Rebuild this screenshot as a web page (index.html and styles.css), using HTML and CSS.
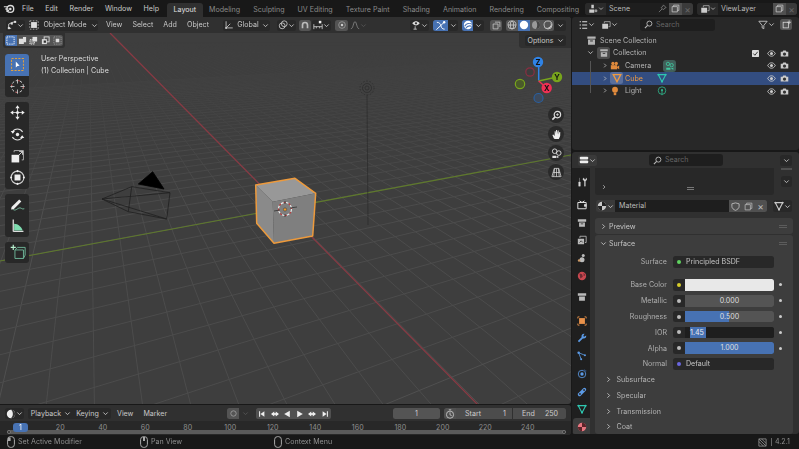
FILE: index.html
```html
<!DOCTYPE html>
<html lang="en">
<head>
<meta charset="utf-8">
<title>Blender 4.2.1</title>
<link rel="stylesheet" href="styles.css">
</head>
<body>
<svg class="defs" width="0" height="0" aria-hidden="true">
  <symbol id="down" viewBox="0 0 8 8"><path d="M1.5 2.8 4 5.3 6.5 2.8" fill="none" stroke="currentColor" stroke-width="1"/></symbol>
  <symbol id="right" viewBox="0 0 8 8"><path d="M2.8 1.5 5.3 4 2.8 6.5" fill="none" stroke="currentColor" stroke-width="1"/></symbol>
  <symbol id="eye" viewBox="0 0 10 10"><path d="M.8 5C2 2.8 3.4 2 5 2s3 .8 4.2 3C8 7.2 6.6 8 5 8S2 7.2.8 5Z" fill="none" stroke="currentColor"/><circle cx="5" cy="5" r="1.7" fill="currentColor"/></symbol>
  <symbol id="cam" viewBox="0 0 10 10"><path d="M.8 3h2l.8-1.2h2.8L7.2 3h2v5.4H.8Z" fill="currentColor"/><circle cx="5" cy="5.6" r="1.8" fill="#333"/></symbol>
  <symbol id="mouse" viewBox="0 0 8 12"><rect x=".6" y=".6" width="6.8" height="10.8" rx="3" fill="none" stroke="currentColor"/></symbol>
  <symbol id="mouse-l" viewBox="0 0 8 12"><rect x=".6" y=".6" width="6.8" height="10.8" rx="3" fill="none" stroke="currentColor"/><path d="M1 1.5h2.6V5H1Z" fill="currentColor"/></symbol>
  <symbol id="mouse-m" viewBox="0 0 8 12"><rect x=".6" y=".6" width="6.8" height="10.8" rx="3" fill="none" stroke="currentColor"/><path d="M3 1h2v4H3Z" fill="currentColor"/></symbol>
  <symbol id="box" viewBox="0 0 12 12"><path d="M1.5 1.5h9v2.5h-9ZM2.2 5h7.6v5.5H2.2Z" fill="currentColor"/><path d="M4.5 6.5h3" stroke="#282828"/></symbol>
  <symbol id="copy" viewBox="0 0 12 12"><path d="M3.5 3.5V1.5h7v7H8.5M1.5 3.5h7v7h-7Z" fill="none" stroke="currentColor"/></symbol>
  <symbol id="mesh" viewBox="0 0 12 12"><path d="M1.5 2h9L6 10.5Z" fill="none" stroke="currentColor" stroke-width="1.4"/><g fill="currentColor"><circle cx="1.8" cy="2" r="1.2"/><circle cx="10.2" cy="2" r="1.2"/><circle cx="6" cy="10.3" r="1.2"/></g></symbol>
  <symbol id="mat" viewBox="0 0 12 12"><circle cx="6" cy="6" r="5" fill="currentColor"/><path d="M6 6V1A5 5 0 0 1 11 6ZM6 6H1A5 5 0 0 0 6 11Z" fill="#222"/></symbol>
</svg>

<div class="app">
  <header class="topbar">
    <svg class="logo" viewBox="0 0 14 12"><circle cx="8.5" cy="6.5" r="4" fill="none" stroke="#ddd" stroke-width="1.6"/><circle cx="8.5" cy="6.5" r="1.5" fill="#ddd"/><path d="M1 4h5M2.5 6.5h4M4 9.5l3-1.5" stroke="#ddd" stroke-width="1.2"/></svg>
    <nav class="menu">
      <span>File</span><span>Edit</span><span>Render</span><span>Window</span><span>Help</span>
    </nav>
    <nav class="tabs">
      <span class="tab active">Layout</span><span class="tab">Modeling</span><span class="tab">Sculpting</span><span class="tab">UV Editing</span><span class="tab">Texture Paint</span><span class="tab">Shading</span><span class="tab">Animation</span><span class="tab">Rendering</span><span class="tab">Compositing</span>
    </nav>
    <div class="datablock scene">
      <span class="db-icon"><svg viewBox="0 0 12 12" class="ic10"><path d="M4 1h3v4H4ZM1.5 6.5h6v4h-6Z" fill="#ccc"/><circle cx="9.5" cy="8" r="1.8" fill="#999"/></svg><svg class="chev"><use href="#down"/></svg></span>
      <span class="db-name">Scene</span>
      <svg viewBox="0 0 10 10" class="ic9 pin"><path d="M6 1 9 4 7.5 4.5 6 6.5 3.5 4 5.5 2.5ZM4.5 5.5 1 9" fill="none" stroke="#777"/></svg>
      <span class="db-btn"><svg class="ic9"><use href="#copy"/></svg></span>
      <span class="db-x">×</span>
    </div>
    <div class="datablock layer">
      <span class="db-icon"><svg viewBox="0 0 12 12" class="ic10"><path d="M1.5 4.5h7v6h-7Z" fill="#ccc"/><path d="M4 4V2h7v6H9" fill="none" stroke="#aaa"/></svg><svg class="chev"><use href="#down"/></svg></span>
      <span class="db-name">ViewLayer</span>
      <span class="db-btn"><svg class="ic9"><use href="#copy"/></svg></span>
      <span class="db-x">×</span>
    </div>
  </header>

  <main class="workspace">
    <section class="left">
      <div class="viewport">
        <svg class="grid" id="grid" width="571" height="388" viewBox="0 17 571 388"></svg>
        <svg class="scene3d" width="571" height="388" viewBox="0 17 571 388">
          <path class="axis-x" d="M110 33 478 405"/>
          <path class="axis-y" d="M0 261 571 155"/>
          <g class="cam-obj">
            <path d="M102 199 131.700 186.700 170 192.700 166.700 219 128.300 211.700ZM102 199 170 192.700M102 199 166.700 219M131.700 186.700 128.300 211.700"/>
            <path class="cam-tri" d="M152.700 171.700 138.300 184 164 189Z"/>
          </g>
          <g class="light-obj">
            <circle cx="367" cy="88" r="7" stroke-dasharray="1.6 1.6"/>
            <circle cx="367" cy="88" r="4.500"/>
            <circle cx="367" cy="88" r="2"/>
            <path d="M367 95 368 225"/>
          </g>
          <path class="c-top" d="M255.700 185 295 178.300 315.700 193.300 272.700 201.700Z"/>
          <path class="c-left" d="M255.700 185 272.700 201.700 274 243.300 256.700 223.300Z"/>
          <path class="c-right" d="M272.700 201.700 315.700 193.300 312.700 236 274 243.300Z"/>
          <path class="c-edge" d="M255.700 185 295 178.300 315.700 193.300 312.700 236 274 243.300 256.700 223.300Z"/>
          <g class="cursor3d">
            <circle class="c1" cx="285" cy="209" r="6.500"/>
            <circle class="c2" cx="285" cy="209" r="6.500"/>
            <path d="M274 211 280 210M290 208 297 207M285 201V204M285 214V217"/>
            <circle class="c3" cx="285" cy="209.500" r="1.600"/>
          </g>
        </svg>

        <div class="vp-header">
          <span class="btn et"><svg viewBox="0 0 12 12" class="ic10"><path d="M2 10V5l4-2 4-1M2 10h3" fill="none" stroke="#ddd"/><g fill="#ddd"><rect x="1" y="8.500" width="2.500" height="2.500"/><rect x="4.500" y="3" width="2.500" height="2.500"/><rect x="8.500" y="1" width="2.500" height="2.500"/></g></svg><svg class="chev"><use href="#down"/></svg></span>
          <span class="btn mode"><svg viewBox="0 0 12 12" class="ic10"><rect x="2.500" y="2.500" width="7" height="7" fill="#ddd"/><rect x="1" y="1" width="10" height="10" fill="none" stroke="#bbb" stroke-dasharray="2 1.500"/></svg><span>Object Mode</span><svg class="chev"><use href="#down"/></svg></span>
          <nav class="vp-menu"><span>View</span><span>Select</span><span>Add</span><span>Object</span></nav>
          <span class="btn global"><svg viewBox="0 0 12 12" class="ic10"><path d="M2.500 1.500v8h8M2.500 9.500l5-5" fill="none" stroke="#ccc"/><circle cx="2.500" cy="9.500" r="1.200" fill="#ccc"/></svg><span>Global</span><svg class="chev"><use href="#down"/></svg></span>
          <span class="btn w19"><svg viewBox="0 0 12 12" class="ic10"><circle cx="5" cy="7" r="3.500" fill="none" stroke="#ccc"/><circle cx="7.500" cy="4.500" r="3.500" fill="none" stroke="#ccc"/></svg><svg class="chev"><use href="#down"/></svg></span>
          <span class="btn on-gray w12"><svg viewBox="0 0 12 12" class="ic10"><path d="M2 10V6a4 4 0 0 1 8 0v4H8V6a2 2 0 0 0-4 0v4Z" fill="#bbb"/></svg></span>
          <span class="btn w19"><svg viewBox="0 0 12 12" class="ic10"><path d="M1 5v6M11 5v6M1 8h10M4 8v2M8 8v2" stroke="#ccc" fill="none"/><rect x="7" y="1" width="3" height="3" fill="#eee"/></svg><svg class="chev"><use href="#down"/></svg></span>
          <span class="btn on-gray w13 prop"><svg viewBox="0 0 12 12" class="ic10"><circle cx="6" cy="6" r="4" fill="none" stroke="#999"/><circle cx="6" cy="6" r="1.500" fill="#ccc"/></svg></span>
          <span class="btn flat w18"><svg viewBox="0 0 12 12" class="ic10"><path d="M1 10.500C4 10.500 4 2 6 2s2 8.500 5 8.500" fill="none" stroke="#888"/></svg><svg class="chev dim"><use href="#down"/></svg></span>
          <span class="spacer"></span>
          <span class="btn w19"><svg viewBox="0 0 12 12" class="ic10"><path d="M1.500 4C3 2 5 1.500 6 1.500S9 2 10.500 4C9 6 7 6.500 6 6.500S3 6 1.500 4Z" fill="#ddd"/><circle cx="6" cy="4" r="1.400" fill="#333"/><path d="M5 7.500V11M3 11h4" stroke="#ccc"/></svg><svg class="chev"><use href="#down"/></svg></span>
          <span class="btn-pair"><span class="btn blue w15"><svg viewBox="0 0 12 12" class="ic11"><path d="M1.500 10.500 10.500 2M2 2.500c3 0 4 2 4.500 4s1.500 3.500 4 3.500" fill="none" stroke="#fff"/><circle cx="10" cy="2.500" r="1.300" fill="#fff"/></svg></span><span class="btn w10"><svg class="chev"><use href="#down"/></svg></span></span>
          <span class="btn-pair"><span class="btn blue w11"><svg viewBox="0 0 12 12" class="ic10"><circle cx="6" cy="6" r="5" fill="#fff"/><path d="M2 7.500C4 4 8 3.500 11 5M3.500 10c1.500-3 4-3.500 7-2.500" fill="none" stroke="#4772b3" stroke-width="1.300"/></svg></span><span class="btn w11"><svg class="chev"><use href="#down"/></svg></span></span>
          <span class="btn on-gray w12 xray"><svg viewBox="0 0 12 12" class="ic9"><path d="M4 1.500h6.500V8M1.500 4h6.500v6.500H1.500Z" fill="none" stroke="#ccc"/></svg></span>
          <span class="shading">
            <span class="sh"><svg viewBox="0 0 12 12" class="ic10"><circle cx="6" cy="6" r="4.800" fill="none" stroke="#ccc"/><ellipse cx="6" cy="6" rx="2" ry="4.800" fill="none" stroke="#ccc"/><path d="M1.200 6h9.600" stroke="#ccc"/></svg></span>
            <span class="sh active"><svg viewBox="0 0 12 12" class="ic10"><circle cx="6" cy="6" r="5" fill="#fff"/></svg></span>
            <span class="sh"><svg viewBox="0 0 12 12" class="ic10"><circle cx="6" cy="6" r="4.800" fill="#999"/><path d="M6 1.200a4.800 4.800 0 0 1 0 9.600C8 8 8 4 6 1.200Z" fill="#444"/></svg></span>
            <span class="sh"><svg viewBox="0 0 12 12" class="ic10"><circle cx="6" cy="6" r="4.800" fill="none" stroke="#ccc"/><path d="M9 3a4.500 4.500 0 0 1-6 6A4 4 0 0 0 9 3Z" fill="#ccc"/></svg></span>
          </span>
          <span class="btn w12"><svg class="chev"><use href="#down"/></svg></span>
        </div>

        <div class="select-modes">
          <span class="sm blue"><svg viewBox="0 0 10 10" class="ic9"><rect x="1" y="1" width="8" height="8" fill="none" stroke="#fff" stroke-dasharray="1.500 1"/></svg></span>
          <span class="sm"><svg viewBox="0 0 10 10" class="ic9"><path d="M1 3h4.500v-2h3.500v6h-2.500v2h-5.500Z" fill="#ddd"/></svg></span>
          <span class="sm"><svg viewBox="0 0 10 10" class="ic9"><path d="M4 1h5v5H6v3H1V4h3Z" fill="#888"/><rect x="1" y="4" width="5" height="5" fill="none" stroke="#ddd" stroke-dasharray="1.500 1"/><rect x="4" y="1" width="5" height="5" fill="#ddd"/></svg></span>
          <span class="sm"><svg viewBox="0 0 10 10" class="ic9"><rect x="3.500" y="1" width="5.500" height="5.500" fill="none" stroke="#ddd"/><rect x="1" y="3.500" width="5.500" height="5.500" fill="#ddd"/><rect x="3" y="5" width="2.500" height="2.500" fill="#333"/></svg></span>
          <span class="sm"><svg viewBox="0 0 10 10" class="ic9"><rect x="1" y="1" width="8" height="8" fill="none" stroke="#999" stroke-dasharray="1.500 1"/><rect x="3" y="3" width="4" height="4" fill="#ddd"/></svg></span>
        </div>

        <div class="options-tab"><span class="btn options"><span>Options</span><svg class="chev"><use href="#down"/></svg></span></div>

        <div class="vp-text"><div>User Perspective</div><div>(1) Collection | Cube</div></div>

        <aside class="toolbar">
          <div class="tool-group">
            <span class="tool active"><svg viewBox="0 0 20 20" class="tool-ic"><rect x="3" y="3" width="14" height="14" fill="none" stroke="#e0a040" stroke-width="1.200" stroke-dasharray="2.500 1.500"/><path d="M8 6.500v7l2-1.800 2.500-.2Z" fill="#fff"/></svg></span>
            <span class="tool"><svg viewBox="0 0 20 20" class="tool-ic"><circle cx="10" cy="10" r="7" fill="none" stroke="#ddd" stroke-width="1.100" stroke-dasharray="3 2"/><circle cx="10" cy="10" r="7" fill="none" stroke="#c44" stroke-width="1.100" stroke-dasharray="2 9"/><path d="M10 1.500v5M10 13.500v5M1.500 10h5M13.500 10h5" stroke="#ccc"/></svg></span>
          </div>
          <div class="tool-group">
            <span class="tool"><svg viewBox="0 0 20 20" class="tool-ic"><path d="M10 3v14M3 10h14" stroke="#ddd"/><path d="M10 1.500 12.500 5h-5ZM10 18.500 12.500 15h-5ZM1.500 10 5 12.500v-5ZM18.500 10 15 12.500v-5Z" fill="#eee"/><circle cx="10" cy="10" r="1.800" fill="#eee"/></svg></span>
            <span class="tool"><svg viewBox="0 0 20 20" class="tool-ic"><path d="M4 7a7 7 0 0 1 12 0M16 13a7 7 0 0 1-12 0" fill="none" stroke="#ddd" stroke-width="1.300"/><path d="M2 6h5l-2.500 3ZM18 14h-5l2.500-3Z" fill="#eee"/><circle cx="10" cy="10" r="2" fill="#eee"/></svg></span>
            <span class="tool"><svg viewBox="0 0 20 20" class="tool-ic"><rect x="3" y="8" width="9" height="9" fill="#eee"/><path d="M6 5V3h11v11h-2" fill="none" stroke="#bbb"/><path d="M9 11 16 4M12 4h4v4" fill="none" stroke="#eee"/></svg></span>
            <span class="tool"><svg viewBox="0 0 20 20" class="tool-ic"><circle cx="10" cy="10" r="7.500" fill="none" stroke="#ccc" stroke-width="1.300"/><rect x="6.500" y="6.500" width="7" height="7" fill="#eee"/><g fill="#eee"><circle cx="10" cy="2.500" r="1.200"/><circle cx="10" cy="17.500" r="1.200"/><circle cx="2.500" cy="10" r="1.200"/><circle cx="17.500" cy="10" r="1.200"/></g></svg></span>
          </div>
          <div class="tool-group">
            <span class="tool"><svg viewBox="0 0 20 20" class="tool-ic"><path d="M3 13 12 4l2.500 2.500-9 9-3 .5Z" fill="#eee"/><path d="M5 16c3 2 5-2 8-2 2 0 2 2 5 1" fill="none" stroke="#7fc8a8"/></svg></span>
            <span class="tool"><svg viewBox="0 0 20 20" class="tool-ic"><path d="M5 17V3M5 17h12" stroke="#ddd" stroke-width="1.500"/><path d="M6 8c5 0 9 4 10 8H6Z" fill="#7fdcb0"/></svg></span>
          </div>
          <div class="tool-group">
            <span class="tool"><svg viewBox="0 0 20 20" class="tool-ic"><path d="M7 7h10v10H7ZM7 7l3-3h9v9l-2 4" fill="none" stroke="#6fb89a" stroke-width="1.100"/><path d="M5 1v6M2 4h6" stroke="#b8f0d0" stroke-width="1.400"/></svg></span>
          </div>
        </aside>

        <svg class="gizmo" width="60" height="60" viewBox="510 52 60 60">
          <path class="g-z" d="M538.700 80.500V62"/>
          <path class="g-y" d="M538.700 81 557 77"/>
          <path class="g-x" d="M538.700 81 546.700 88"/>
          <circle class="ring-x" cx="530" cy="72" r="4.200"/>
          <circle class="ring-y" cx="520" cy="84" r="4.700"/>
          <circle class="ring-z" cx="538.500" cy="98" r="4.500"/>
          <circle fill="#2f83e6" cx="538" cy="62" r="5.200"/>
          <circle fill="#78a51c" cx="557" cy="77" r="5.200"/>
          <circle fill="#ee3054" cx="546.700" cy="88" r="5.200"/>
          <text x="538" y="64.600">Z</text><text x="557" y="79.600">Y</text><text x="546.700" y="90.600">X</text>
        </svg>

        <div class="nav-tools">
          <span class="nav"><svg viewBox="0 0 12 12" class="ic11"><circle cx="7" cy="5" r="3.500" fill="none" stroke="#ddd" stroke-width="1.300"/><path d="M4.500 7.500 1.500 10.500" stroke="#ddd" stroke-width="1.800"/><path d="M5.500 5h3M7 3.500v3" stroke="#ddd" stroke-width=".8"/></svg></span>
          <span class="nav"><svg viewBox="0 0 12 12" class="ic11"><path d="M3 10 1.500 6.500l1-.5L4 7.500V2.500l1 0 .5 3V1.200h1l.5 4.300.3-3.800h1l.2 4.300.6-2.800h1L10 7.500 8.500 11H4Z" fill="#eee"/></svg></span>
          <span class="nav"><svg viewBox="0 0 12 12" class="ic11"><circle cx="4" cy="3.500" r="2.500" fill="none" stroke="#ddd"/><circle cx="8.500" cy="5.500" r="2.500" fill="none" stroke="#ddd"/><path d="M1.500 8.500h4v2.500h-4ZM5.500 9.500 8 8.500V11L5.500 10Z" fill="#ddd"/></svg></span>
          <span class="nav"><svg viewBox="0 0 12 12" class="ic11"><path d="M3.500 1.500h5L11 10.500H1ZM2.300 6h7.400M6 1.500v9M4 1.500l-1 9M8 1.500l1 9" fill="none" stroke="#ddd" stroke-width=".8"/></svg></span>
        </div>
      </div>

      <div class="timeline">
        <div class="tl-header">
          <span class="btn et"><svg viewBox="0 0 12 12" class="ic10"><circle cx="6" cy="6" r="5" fill="#eee"/><path d="M6 1a5 5 0 0 1 0 10C9 9 9 3 6 1Z" fill="#333"/></svg><svg class="chev"><use href="#down"/></svg></span>
          <span class="btn-pair pb"><span class="btn w42"><span>Playback</span><svg class="chev"><use href="#down"/></svg></span><span class="btn w37"><span>Keying</span><svg class="chev"><use href="#down"/></svg></span></span>
          <nav class="vp-menu tl-menu"><span>View</span><span>Marker</span></nav>
          <span class="spacer"></span>
          <span class="btn-pair rec"><span class="btn on-gray w12"><svg viewBox="0 0 10 10" class="ic9"><circle cx="5" cy="5" r="3" fill="none" stroke="#999"/></svg></span><span class="btn flat w12"><svg class="chev dim"><use href="#down"/></svg></span></span>
          <span class="transport">
            <span class="tp"><svg viewBox="0 0 10 10" class="ic8"><path d="M2 1.500V8.500" stroke="#eee" stroke-width="1.300"/><path d="M8 1.500V8.500L3 5Z" fill="#eee"/></svg></span>
            <span class="tp"><svg viewBox="0 0 10 10" class="ic8"><path d="M4 2V8L0 5ZM6 2V8L10 5Z" fill="#eee"/><path d="M5 3 7 5 5 7 3 5Z" fill="#eee"/></svg></span>
            <span class="tp"><svg viewBox="0 0 10 10" class="ic8"><path d="M8.500 1V9L1.500 5Z" fill="#eee"/></svg></span>
            <span class="tp"><svg viewBox="0 0 10 10" class="ic8"><path d="M1.500 1V9L8.500 5Z" fill="#eee"/></svg></span>
            <span class="tp"><svg viewBox="0 0 10 10" class="ic8"><path d="M4 2V8L0 5ZM6 2V8L10 5Z" fill="#eee"/><path d="M5 3 7 5 5 7 3 5Z" fill="#eee"/></svg></span>
            <span class="tp"><svg viewBox="0 0 10 10" class="ic8"><path d="M8 1.500V8.500" stroke="#eee" stroke-width="1.300"/><path d="M2 1.500V8.500L7 5Z" fill="#eee"/></svg></span>
          </span>
          <span class="num current">1</span>
          <span class="preview-btn"><svg viewBox="0 0 12 12" class="ic10"><circle cx="6" cy="6.800" r="4.300" fill="none" stroke="#ccc"/><path d="M6 4v3l2 1M4.500 1h3" fill="none" stroke="#ccc"/></svg></span>
          <span class="num range"><span>Start</span><span>1</span></span>
          <span class="num range end"><span>End</span><span>250</span></span>
        </div>
        <div class="ruler">
          <div class="ticks">
            <span>20</span><span>40</span><span>60</span><span>80</span><span>100</span><span>120</span><span>140</span><span>160</span><span>180</span><span>200</span><span>220</span><span>240</span>
          </div>
          <div class="scrollbar"><span class="sb-end"></span><span class="sb-end"></span></div>
          <span class="playhead">1</span>
        </div>
      </div>
    </section>

    <section class="right">
      <div class="outliner">
        <div class="ol-header">
          <span class="btn w19"><svg viewBox="0 0 12 12" class="ic10"><path d="M2 2h1.500M2 6h1.500M2 10h1.500M5 2h6M5 6h6M5 10h6" stroke="#ddd" stroke-width="1.300"/></svg><svg class="chev"><use href="#down"/></svg></span>
          <span class="btn w19"><svg viewBox="0 0 12 12" class="ic10"><path d="M1.500 4.500h7v6h-7Z" fill="#ccc"/><path d="M4 4V2h7v6H9" fill="none" stroke="#aaa"/></svg><svg class="chev"><use href="#down"/></svg></span>
          <span class="search ol-search"><svg viewBox="0 0 10 10" class="ic9"><circle cx="6" cy="4" r="2.800" fill="none" stroke="#bbb"/><path d="M4 6 1 9" stroke="#bbb" stroke-width="1.200"/></svg><span>Search</span></span>
          <span class="spacer"></span>
          <span class="btn w19"><svg viewBox="0 0 12 12" class="ic10"><path d="M1 1.500h10L7 6.500V10.500L5 9.500V6.500Z" fill="none" stroke="#ccc"/></svg><svg class="chev"><use href="#down"/></svg></span>
          <span class="btn on-gray w12"><svg viewBox="0 0 12 12" class="ic9"><rect x="1.500" y="3" width="7" height="7.500" fill="none" stroke="#ddd"/><path d="M9.500 .5v5M7 3h5" stroke="#ddd"/></svg></span>
        </div>
        <ul class="tree">
          <li class="row root"><svg class="ic11 row-ic"><use href="#box"/></svg><span>Scene Collection</span></li>
          <li class="row coll"><svg class="chev tw"><use href="#down"/></svg><span class="ic-bg"><svg class="ic10"><use href="#box"/></svg></span><span>Collection</span>
            <span class="vis"><svg viewBox="0 0 8 8" class="check"><rect width="8" height="8" rx="1" fill="#ddd"/><path d="M1.500 4 3.300 6 6.500 2" fill="none" stroke="#222"/></svg><svg class="ic9"><use href="#eye"/></svg><svg class="ic9"><use href="#cam"/></svg></span></li>
          <li class="row obj"><svg class="chev tw"><use href="#right"/></svg><svg viewBox="0 0 12 12" class="ic10 row-ic"><circle cx="3.500" cy="3" r="2" fill="#e08a3c"/><circle cx="7.500" cy="3" r="2" fill="#e08a3c"/><rect x="1" y="5" width="7.500" height="5" fill="#e08a3c"/><path d="M8.500 7 11 5.500V10L8.500 8.500Z" fill="#e08a3c"/></svg><span class="obj-name cam-name">Camera</span>
            <span class="data-badge"><svg viewBox="0 0 12 12" class="ic10"><circle cx="3.500" cy="3.500" r="2" fill="none" stroke="#3fc9a0"/><circle cx="8" cy="5" r="2" fill="none" stroke="#3fc9a0"/><path d="M1.500 8h5v2.500h-5ZM7 9l3-1v2.500Z" fill="#3fc9a0"/></svg></span>
            <span class="vis"><svg class="ic9"><use href="#eye"/></svg><svg class="ic9"><use href="#cam"/></svg></span></li>
          <li class="row obj selected"><svg class="chev tw"><use href="#right"/></svg><span class="ic-bg sel-bg"><svg viewBox="0 0 12 12" class="ic10"><path d="M1.500 2h9L6 10.500Z" fill="none" stroke="#ee9a40" stroke-width="1.600"/></svg></span><span class="obj-name orange">Cube</span>
            <span class="data-icon"><svg class="ic10 teal"><use href="#mesh"/></svg></span>
            <span class="vis"><svg class="ic9"><use href="#eye"/></svg><svg class="ic9"><use href="#cam"/></svg></span></li>
          <li class="row obj"><svg class="chev tw"><use href="#right"/></svg><svg viewBox="0 0 12 12" class="ic10 row-ic"><circle cx="6" cy="4.500" r="3.500" fill="#e08a3c"/><rect x="4.500" y="8" width="3" height="3" fill="#e08a3c"/></svg><span class="obj-name">Light</span>
            <span class="data-icon light-d"><svg viewBox="0 0 12 12" class="ic10"><circle cx="6" cy="5.500" r="4.500" fill="none" stroke="#2fb68c"/><circle cx="6" cy="5" r="1.300" fill="#2fb68c"/><path d="M6 6v5" stroke="#2fb68c"/></svg></span>
            <span class="vis"><svg class="ic9"><use href="#eye"/></svg><svg class="ic9"><use href="#cam"/></svg></span></li>
        </ul>
        <span class="tree-line"></span>
      </div>

      <div class="properties">
        <div class="pr-header">
          <span class="btn w19 pr-et"><svg viewBox="0 0 12 12" class="ic10"><rect x="1" y="2" width="10" height="3.500" rx="1" fill="#eee"/><rect x="1" y="6.500" width="10" height="3.500" rx="1" fill="#eee"/></svg><svg class="chev"><use href="#down"/></svg></span>
          <span class="search pr-search"><svg viewBox="0 0 10 10" class="ic9"><circle cx="6" cy="4" r="2.800" fill="none" stroke="#bbb"/><path d="M4 6 1 9" stroke="#bbb" stroke-width="1.200"/></svg><span>Search</span></span>
          <span class="spacer"></span>
          <span class="btn w12"><svg class="chev"><use href="#down"/></svg></span>
        </div>
        <div class="pr-body">
          <div class="pr-tabs">
            <span class="pt first"><svg viewBox="0 0 12 12" class="ic10"><path d="M3 1v5M2 6h2v5H2ZM8 1 7 3l2 2v6h1V5l2-2-1-2v2H9Z" fill="#ddd" stroke="#ddd" stroke-width=".4"/></svg></span>
            <span class="pt"><svg viewBox="0 0 12 12" class="ic10"><path d="M1 3h10v7.500H1ZM3 1l3 2 3-2" fill="none" stroke="#ddd" stroke-width="1.200"/><rect x="8.500" y="5" width="3" height="3" fill="#ddd"/></svg></span>
            <span class="pt"><svg viewBox="0 0 12 12" class="ic10"><path d="M1 1.500h10v3H1ZM2.500 5.500h7v5h-7Z" fill="#bbb"/><path d="M4.500 7h3" stroke="#333"/></svg></span>
            <span class="pt"><svg viewBox="0 0 12 12" class="ic10"><path d="M1 4.500h7.500v6.500H1Z" fill="#bbb"/><path d="M3.500 3.500V1.500H11V9H9.500" fill="none" stroke="#bbb"/><path d="M3 9l2-2 2 2" stroke="#333" fill="none"/></svg></span>
            <span class="pt"><svg viewBox="0 0 12 12" class="ic10"><circle cx="7.500" cy="3" r="1.800" fill="#bbb"/><circle cx="6" cy="8" r="3" fill="#bbb"/><circle cx="2.500" cy="9" r="1.500" fill="#c96"/></svg></span>
            <span class="pt"><svg viewBox="0 0 12 12" class="ic10"><circle cx="6" cy="6" r="5" fill="#c8474f"/><path d="M3 3l3 1 1 3-3 2ZM8 2l2 3-2 1Z" fill="#6b2b33"/></svg></span>
            <span class="pt gap2"><svg viewBox="0 0 12 12" class="ic10"><path d="M1 1.500h10v3H1ZM2.500 5.500h7v5h-7Z" fill="#bbb"/></svg></span>
            <span class="pt gap3"><svg viewBox="0 0 12 12" class="ic10"><rect x="2.500" y="2.500" width="7" height="7" fill="#e8914a"/><path d="M1 3V1h2M9 1h2v2M11 9v2H9M3 11H1V9" fill="none" stroke="#e8914a"/></svg></span>
            <span class="pt"><svg viewBox="0 0 12 12" class="ic10"><path d="M11 3 8.500 4.500 7.500 3.500 9 1C6.500.5 5 2.500 5.500 5L1 9.500 2.500 11 7 6.500C9.500 7 11.500 5.500 11 3Z" fill="#5b9ae6"/></svg></span>
            <span class="pt"><svg viewBox="0 0 12 12" class="ic10"><path d="M2 2 9 5M2 2 5 10" stroke="#5b9ae6"/><circle cx="2" cy="2" r="1.500" fill="#5b9ae6"/><circle cx="9.500" cy="5" r="1.200" fill="#5b9ae6"/><circle cx="5" cy="10" r="1.200" fill="#5b9ae6"/></svg></span>
            <span class="pt"><svg viewBox="0 0 12 12" class="ic10"><circle cx="6" cy="6" r="4.500" fill="none" stroke="#5b9ae6"/><circle cx="6" cy="6" r="2" fill="#5b9ae6"/><path d="M8 1 11 3" stroke="#2f4a70" stroke-width="2"/></svg></span>
            <span class="pt"><svg viewBox="0 0 12 12" class="ic10"><path d="M3 9 9 3" stroke="#5b9ae6" stroke-width="4" stroke-linecap="round"/><circle cx="3.500" cy="8.500" r="1.200" fill="#333"/><circle cx="8.500" cy="3.500" r="1.200" fill="#333"/></svg></span>
            <span class="pt"><svg class="ic10 teal"><use href="#mesh"/></svg></span>
            <span class="pt active"><svg viewBox="0 0 12 12" class="ic10"><circle cx="6" cy="6" r="5" fill="#e8757f"/><path d="M6 6V1A5 5 0 0 1 11 6ZM6 6H1A5 5 0 0 0 6 11Z" fill="#5c2429"/></svg></span>
          </div>
          <div class="pr-main">
            <div class="slot-list">
              <span class="slot-foot"><svg class="ic6"><use href="#right"/></svg><span class="grip-h"></span></span>
              <span class="slot-side"><span class="slot-mini"></span><span class="btn w11 slot-chev"><svg class="chev"><use href="#down"/></svg></span></span>
            </div>
            <div class="mat-row">
              <span class="btn mat-pick"><svg class="ic10"><use href="#mat"/></svg><svg class="chev"><use href="#down"/></svg></span>
              <span class="mat-name">Material</span>
              <span class="mat-btns"><span><svg viewBox="0 0 10 10" class="ic9"><path d="M5 1 9 2V5C9 7 7 8.500 5 9.300 3 8.500 1 7 1 5V2Z" fill="none" stroke="#bbb"/></svg></span><span><svg class="ic9"><use href="#copy"/></svg></span><span class="mat-x">×</span></span>
              <span class="btn mat-link"><svg class="ic10"><use href="#mesh"/></svg><svg class="chev"><use href="#down"/></svg></span>
            </div>
            <section class="panel preview">
              <svg class="chev pn-chev"><use href="#right"/></svg><span>Preview</span><span class="grip"></span>
            </section>
            <section class="panel surface">
              <div class="panel-head"><svg class="chev pn-chev"><use href="#down"/></svg><span>Surface</span><span class="grip"></span></div>
              <div class="prop-row r-surface"><label>Surface</label><span class="val dark"><i class="sock green"></i><span>Principled BSDF</span></span></div>
              <div class="prop-row r-base"><label>Base Color</label><span class="val split"><span class="sock-box"><i class="sock yellow"></i></span><span class="color"></span></span><i class="dot"></i></div>
              <div class="prop-row"><label>Metallic</label><span class="val split"><span class="sock-box"><i class="sock gray"></i></span><span class="slider"><b>0.000</b></span></span><i class="dot"></i></div>
              <div class="prop-row"><label>Roughness</label><span class="val split"><span class="sock-box"><i class="sock gray"></i></span><span class="slider half"><b>0.500</b></span></span><i class="dot"></i></div>
              <div class="prop-row"><label>IOR</label><span class="val split"><span class="sock-box"><i class="sock gray"></i></span><span class="ior"><b>1.45</b></span></span><i class="dot"></i></div>
              <div class="prop-row"><label>Alpha</label><span class="val split"><span class="sock-box"><i class="sock gray"></i></span><span class="slider full"><b>1.000</b></span></span><i class="dot"></i></div>
              <div class="prop-row"><label>Normal</label><span class="val dark"><i class="sock violet"></i><span>Default</span></span></div>
              <div class="sub"><svg class="chev"><use href="#right"/></svg><span>Subsurface</span></div>
              <div class="sub"><svg class="chev"><use href="#right"/></svg><span>Specular</span></div>
              <div class="sub"><svg class="chev"><use href="#right"/></svg><span>Transmission</span></div>
              <div class="sub"><svg class="chev"><use href="#right"/></svg><span>Coat</span></div>
            </section>
          </div>
        </div>
      </div>
    </section>
  </main>

  <footer class="status">
    <span class="st st1"><svg class="m"><use href="#mouse-l"/></svg>Set Active Modifier</span>
    <span class="st st2"><svg class="m"><use href="#mouse-m"/></svg>Pan View</span>
    <span class="st st3"><svg class="m"><use href="#mouse"/></svg>Context Menu</span>
    <span class="spacer"></span>
    <svg viewBox="0 0 10 10" class="ic9 netw"><path d="M1 1h8v8H1ZM1 4l5 5M1 1l8 8M4 1l5 5" fill="none" stroke="#888"/></svg>
    <span class="ver">4.2.1</span>
  </footer>
</div>
<script src="grid.js"></script>
</body>
</html>
```

FILE: styles.css
```css
* { box-sizing: border-box; }
html, body { margin: 0; padding: 0; background: #181818; overflow: hidden; }
body { width: 799px; height: 449px; font: 7.1px/1 Inter, "Liberation Sans", sans-serif; color: #c8c8c8; white-space: nowrap; }
ul { list-style: none; margin: 0; padding: 0; }
svg { display: block; flex: none; }
.defs { position: absolute; }
.ic6 { width: 6px; height: 6px; }
.ic8 { width: 8px; height: 8px; }
.ic9 { width: 9px; height: 9px; }
.ic10 { width: 10px; height: 10px; }
.ic11 { width: 11px; height: 11px; }
.chev { width: 7px; height: 7px; color: #c8c8c8; }
.chev.dim { color: #555; }
.spacer { flex: 1; }
.teal { color: #2fc7b0; }

.app { width: 799px; height: 449px; display: flex; flex-direction: column; filter: blur(.4px); }

/* top bar */
.topbar { height: 17px; flex: none; display: flex; align-items: center; background: #181818; padding-left: 3px; }
.logo { width: 12px; height: 11px; margin-right: 7px; }
.menu { display: flex; gap: 11.5px; width: 145px; color: #c8c8c8; }
.tabs { display: flex; align-self: flex-end; width: 418px; height: 14px; overflow: hidden; flex: none; }
.tab { padding: 0 6.5px; line-height: 14px; color: #8a8a8a; }
.tab.active { background: #303030; color: #e0e0e0; border-radius: 3px 3px 0 0; }
.datablock { display: flex; align-items: center; height: 12px; background: #282828; border-radius: 3px; overflow: hidden; }
.scene { width: 108px; }
.layer { width: 100px; margin-left: 4px; }
.db-icon { display: flex; align-items: center; width: 21px; padding-left: 3px; height: 100%; background: #2a2a2a; }
.db-icon .chev { width: 6px; }
.db-name { flex: 1; padding-left: 3px; color: #bbb; background: #1e1e1e; height: 100%; line-height: 12px; }
.scene .pin { position: relative; margin: 0 2px 0 -11px; }
.db-btn { width: 13px; height: 100%; background: #505050; display: flex; align-items: center; justify-content: center; color: #ccc; }
.db-x { width: 11px; text-align: center; background: #3a3a3a; height: 100%; line-height: 12px; color: #666; font-size: 10px; }

/* layout */
.workspace { flex: 1; min-height: 0; display: flex; }
.left { width: 571px; display: flex; flex-direction: column; gap: 1px; }
.right { width: 228px; display: flex; flex-direction: column; gap: 2px; padding: 0 0 1px 1px; }

/* viewport */
.viewport { position: relative; height: 387px; background: #3e3e3e; overflow: hidden; border-radius: 0 3px 3px 0; }
.grid, .scene3d { position: absolute; left: 0; top: 0; }
.grid { -webkit-mask-image: linear-gradient(transparent 25px, #000 190px); mask-image: linear-gradient(transparent 25px, #000 190px); }
.grid line { stroke: #4c4c4c; stroke-width: 1; }
.grid line.major { stroke: #505050; stroke-width: 1; }
.axis-x { stroke: #8a3a44; stroke-width: 1.2; fill: none; }
.axis-y { stroke: #5f7a2c; stroke-width: 1.1; fill: none; }
.cam-obj path { fill: none; stroke: #1f1f1f; stroke-width: .8; }
.cam-obj .cam-tri { fill: #000; stroke: #000; }
.light-obj circle, .light-obj path { fill: none; stroke: #262626; stroke-width: .6; }
.c-top { fill: #989898; }
.c-left { fill: #8a8a8a; }
.c-right { fill: #7f7f7f; }
.c-edge { fill: none; stroke: #ed9a3c; stroke-width: 1.5; stroke-linejoin: round; }
.cursor3d path { stroke: #333; stroke-width: .8; fill: none; }
.cursor3d .c1 { fill: none; stroke: #eee; stroke-width: 1.1; stroke-dasharray: 3 2.1; }
.cursor3d .c2 { fill: none; stroke: #c03a3a; stroke-width: 1.1; stroke-dasharray: 2.1 3; stroke-dashoffset: 2.1; }
.cursor3d .c3 { fill: #ee9a30; stroke: #222; stroke-width: .4; }

.vp-header { position: absolute; left: 0; top: 0; right: 0; height: 16px; display: flex; align-items: center; background: #303030; padding: 0 5px 0 6px; }
.btn { display: inline-flex; align-items: center; justify-content: center; height: 11px; background: #282828; border-radius: 2.5px; color: #c8c8c8; flex: none; }
.btn.flat { background: none; }
.btn.on-gray { background: #545454; }
.btn.blue { background: #4772b3; }
.w10 { width: 10px; } .w11 { width: 11px; } .w12 { width: 12px; } .w13 { width: 13px; } .w15 { width: 15px; }
.w18 { width: 18px; } .w19 { width: 19px; } .w37 { width: 37px; } .w42 { width: 46px; }
.et { width: 19px; }
.mode { width: 69px; margin-left: 4px; gap: 4px; }
.vp-menu { display: flex; gap: 10px; margin-left: 8px; width: 117px; color: #c8c8c8; flex: none; }
.global { width: 47px; gap: 3px; }
.vp-header .global + .w19 { margin-left: 7px; }
.vp-header .on-gray { margin-left: 3px; }
.vp-header .on-gray + .w19 { margin-left: 1px; }
.vp-header .prop { margin-left: 4px; }
.vp-header .flat { margin-left: 1px; }
.vp-header .spacer + .w19 { margin-right: 4px; }
.btn-pair { display: inline-flex; margin-right: 4px; }
.btn-pair .btn { border-radius: 0; }
.btn-pair .btn:first-child { border-radius: 2.5px 0 0 2.5px; }
.btn-pair .btn:last-child { border-radius: 0 2.5px 2.5px 0; }
.xray { margin: 0 4px 0 2px !important; }
.shading { display: inline-flex; height: 11px; background: #545454; border-radius: 2.5px; overflow: hidden; flex: none; }
.sh { width: 12px; display: flex; align-items: center; justify-content: center; }
.sh.active { background: #4772b3; }

.select-modes { position: absolute; left: 3px; top: 16px; height: 15px; display: flex; align-items: center; padding: 2px 2px; background: #303030; border-radius: 0 0 3px 3px; }
.sm { width: 11.600px; height: 11px; display: flex; align-items: center; justify-content: center; background: #545454; }
.sm.blue { background: #4772b3; border-radius: 2.5px 0 0 2.5px; }
.sm:last-child { border-radius: 0 2.5px 2.5px 0; }

.options-tab { position: absolute; right: 0; top: 16px; width: 52px; height: 15px; padding: 2px 0 0 6px; background: #303030; border-radius: 0 0 0 3px; }
.options { width: 41px; gap: 3px; }

.vp-text { position: absolute; left: 41px; top: 38px; display: flex; flex-direction: column; gap: 4.5px; color: #dcdcdc; }

.toolbar { position: absolute; left: 5px; top: 37px; width: 24px; display: flex; flex-direction: column; gap: 5px; }
.tool-group { display: flex; flex-direction: column; background: #282828; border-radius: 3px; overflow: hidden; }
.tool { height: 21.600px; display: flex; align-items: center; justify-content: center; }
.tool.active { background: #4772b3; }
.tool-ic { width: 17px; height: 17px; }

.gizmo { position: absolute; left: 510px; top: 35px; overflow: visible; }
.gizmo path { stroke-width: 1.5; fill: none; }
.g-z { stroke: #2f83e6; } .g-y { stroke: #78a51c; } .g-x { stroke: #ee3054; }
.ring-x { fill: #3d3d3d; stroke: #8c2e42; stroke-width: 1.2; }
.ring-y { fill: #4a5a2a; stroke: #78a51c; stroke-width: 1.2; }
.ring-z { fill: #3d4a5c; stroke: #2a5f9f; stroke-width: 1.2; }
.gizmo text { font: 700 7.5px Inter, sans-serif; text-anchor: middle; fill: #111; }

.nav-tools { position: absolute; left: 548px; top: 90px; display: flex; flex-direction: column; gap: 3px; }
.nav { width: 16px; height: 16px; border-radius: 50%; background: #2a2a2a; display: flex; align-items: center; justify-content: center; }

/* timeline */
.timeline { flex: 1; min-height: 0; display: flex; flex-direction: column; background: #282828; border-radius: 0 3px 3px 0; overflow: hidden; }
.tl-header { height: 16px; flex: none; display: flex; align-items: center; background: #303030; padding: 1px 5px 0 5px; }
.pb { margin-left: 4px; margin-right: 0; }
.pb .btn { gap: 3px; }
.tl-menu { width: 90px; margin-left: 6px; gap: 10px; }
.rec { margin-right: 5px; }
.transport { display: inline-flex; height: 11px; background: #3d3d3d; border-radius: 2.5px; overflow: hidden; margin-right: 62px; }
.tp { width: 12.500px; display: flex; align-items: center; justify-content: center; background: #505050; }
.num { height: 11px; background: #545454; color: #ccc; border-radius: 2.5px; display: flex; align-items: center; justify-content: center; flex: none; }
.current { width: 47px; margin-right: 4px; }
.preview-btn { width: 12px; height: 11px; background: #505050; border-radius: 2.5px 0 0 2.5px; display: flex; align-items: center; justify-content: center; }
.range { width: 56px; justify-content: space-between; padding: 0 6px 0 9px; border-radius: 0; margin-right: 1px; background: #4c4c4c; }
.range.end { width: 53px; margin: 0; border-radius: 0 2.5px 2.5px 0; padding: 0 8px 0 9px; }

.ruler { position: relative; flex: 1; background: #282828; }
.ticks { display: flex; padding-left: 39px; height: 10px; color: #8f8f8f; }
.ticks span { width: 42.500px; text-align: center; line-height: 14px; }
.scrollbar { position: absolute; left: 7px; right: 5px; top: 9px; height: 4px; border-radius: 2px; background: #5a5a5a; display: flex; justify-content: space-between; }
.sb-end { width: 4px; height: 4px; border-radius: 50%; background: #282828; border: 1px solid #777; }
.playhead { position: absolute; left: 13px; top: 2px; width: 15px; height: 9px; background: #4772b3; border-radius: 3px; color: #fff; text-align: center; line-height: 9px; }

/* outliner */
.outliner { position: relative; height: 133px; flex: none; background: #282828; border-radius: 3px; overflow: hidden; }
.ol-header { height: 17px; display: flex; align-items: center; padding: 0 7px 2px 5px; }
.ol-header .btn { margin-right: 4px; }
.ol-header .on-gray { margin-right: 0; }
.search { display: flex; align-items: center; gap: 3px; height: 12px; background: #1e1e1e; border-radius: 3px; color: #666; padding-left: 4px; }
.ol-search { width: 75px; margin-left: 17px; }
.row { position: relative; height: 12.670px; display: flex; align-items: center; color: #b4b4b4; }
.root { padding-left: 14px; gap: 3px; }
.coll { padding-left: 15px; }
.coll .tw { margin-right: 3px; }
.ic-bg { width: 13px; height: 12px; background: #4c4c4c; border-radius: 2.500px; display: flex; align-items: center; justify-content: center; margin-right: 3px; }
.obj { padding-left: 30px; }
.obj .tw { margin-right: 2px; width: 6px; }
.obj .row-ic { margin-right: 5px; }
.obj-name { width: 31px; }
.cam-name { width: 38px; }
.selected { background: #334d80; }
.sel-bg { margin: 0 2px 0 0; background: #5a6f9c; }
.orange { color: #ee9a40; }
.data-badge { width: 13px; height: 12px; background: #41605a; border-radius: 3px; display: flex; align-items: center; justify-content: center; }
.data-icon { width: 12px; display: flex; justify-content: center; }
.vis { position: absolute; right: 10px; top: 2px; display: flex; gap: 4px; align-items: center; color: #ccc; }
.check { width: 7px; height: 7px; margin-right: 4px; }
.tree-line { position: absolute; left: 18px; top: 44px; width: 1px; height: 32px; background: #555; }

/* properties */
.properties { flex: 1; min-height: 0; background: #303030; border-radius: 3px; overflow: hidden; display: flex; flex-direction: column; }
.pr-header { height: 16px; flex: none; display: flex; align-items: center; padding: 0 7px 0 6px; }
.pr-et { background: #3a3a3a; }
.pr-search { width: 74px; margin-left: 52px; }
.pr-body { flex: 1; min-height: 0; display: flex; }
.pr-tabs { width: 18px; flex: none; background: #1f1f1f; display: flex; flex-direction: column; align-items: flex-end; padding-top: 5px; }
.pt { width: 17px; height: 17.700px; flex: none; display: flex; align-items: center; justify-content: center; }
.first { margin-bottom: 5.300px; }
.gap2 { margin-top: 3.500px; }
.gap3 { margin-top: 6.300px; }
.pt.active { background: #3d3d3d; border-radius: 3px 0 0 3px; }
.pr-main { flex: 1; min-width: 0; padding-left: 5px; display: flex; flex-direction: column; }
.slot-list { position: relative; height: 27px; flex: none; width: 199px; }
.slot-foot { position: absolute; left: 0; top: 0; width: 179px; height: 27px; background: #282828; border-radius: 0 0 3px 3px; display: flex; align-items: flex-end; padding: 0 0 5px 6px; color: #bbb; }
.grip-h { width: 7px; height: 3px; margin-left: 80px; border-top: 1px solid #777; border-bottom: 1px solid #777; }
.slot-side { position: absolute; left: 186px; top: 0; display: flex; flex-direction: column; gap: 6px; }
.slot-mini { width: 11px; height: 2px; background: #505050; }
.slot-chev { height: 11px; }
.mat-row { display: flex; align-items: center; height: 12px; margin-top: 5px; width: 198px; }
.mat-pick { width: 19px; height: 12px; background: #3a3a3a; border-radius: 2.500px 0 0 2.500px; margin-left: 1px; }
.mat-name { width: 114px; height: 12px; background: #1e1e1e; color: #bbb; line-height: 12px; padding-left: 4px; }
.mat-btns { display: flex; height: 12px; width: 38px; background: #505050; border-radius: 0 2.500px 2.500px 0; color: #bbb; }
.mat-btns span { flex: 1; display: flex; align-items: center; justify-content: center; }
.mat-x { font-size: 10px; }
.mat-link { width: 19px; height: 12px; margin-left: 6px; }
.panel { background: #3d3d3d; border-radius: 3px; width: 198px; flex: none; }
.preview { display: flex; align-items: center; height: 16px; margin-top: 6px; color: #c4c4c4; padding: 1px 0 0 5px; }
.panel-head { display: flex; align-items: center; height: 16px; padding: 1px 0 0 5px; color: #c4c4c4; }
.pn-chev { margin-right: 2px; }
.grip { width: 8px; height: 3px; margin: 0 6px 0 auto; border-top: 1px solid #5c5c5c; border-bottom: 1px solid #5c5c5c; }
.surface { margin-top: 1px; flex: 1; min-height: 0; overflow: hidden; }
.prop-row { position: relative; display: flex; align-items: center; height: 15.800px; padding-left: 78px; }
.r-surface { margin-top: 3px; }
.r-base { margin-top: 7.300px; }
.prop-row label { position: absolute; right: 126px; color: #aeaeae; }
.val { width: 101px; height: 11.500px; display: flex; align-items: center; border-radius: 2.500px; overflow: hidden; }
.val.dark { background: #282828; gap: 5px; padding-left: 4px; color: #c4c4c4; }
.val.split { background: #282828; }
.sock-box { width: 12px; height: 100%; display: flex; align-items: center; justify-content: center; flex: none; }
.sock { width: 4px; height: 4px; border-radius: 50%; display: block; flex: none; }
.green { background: #5fd35f; } .yellow { background: #d6cc2a; } .gray { background: #bbb; } .violet { background: #6a66e0; }
.dot { position: absolute; left: 184px; width: 3px; height: 3px; border-radius: 50%; background: #ccc; }
.color { flex: 1; height: 100%; background: #e8e8e8; }
.slider { flex: 1; height: 100%; background: #545454; text-align: center; line-height: 11.500px; color: #ddd; }
.slider b { font-weight: 400; }
.slider.half { background: linear-gradient(90deg, #4772b3 50%, #545454 50%); }
.slider.full { background: #4772b3; }
.ior { flex: 1; height: 100%; background: #1e1e1e; padding-left: 5px; line-height: 11.500px; }
.ior b { display: inline-block; font-weight: 400; width: 16px; background: #4772b3; color: #eee; }
.sub { display: flex; align-items: center; height: 15.700px; padding-left: 10px; gap: 4.500px; color: #b4b4b4; }

/* status */
.status { height: 14px; flex: none; display: flex; align-items: center; padding: 0 9px 0 7px; background: #181818; color: #8f8f8f; }
.st { display: flex; align-items: center; gap: 3px; }
.m { width: 8px; height: 12px; color: #aaa; }
.st1 { width: 133px; }
.st2 { width: 134px; }
.netw { margin-right: 4px; }
.ver { border-left: 1px solid #666; padding-left: 3px; }
```

FILE: grid.js
```js
(function () {
  var svg = document.getElementById('grid');
  var NS = 'http://www.w3.org/2000/svg';
  var O = [284, 208], VR = [89, 12], VG = [1339, 12];
  function add(vp, p, major) {
    var s = (470 - vp[1]) / (p[1] - vp[1]);
    var l = document.createElementNS(NS, 'line');
    l.setAttribute('x1', vp[0]);
    l.setAttribute('y1', vp[1]);
    l.setAttribute('x2', vp[0] + (p[0] - vp[0]) * s);
    l.setAttribute('y2', vp[1] + (p[1] - vp[1]) * s);
    if (major) l.setAttribute('class', 'major');
    svg.appendChild(l);
  }
  function on(a, b, k, d) {
    var t = k / (k + d);
    return [a[0] + (b[0] - a[0]) * t, a[1] + (b[1] - a[1]) * t];
  }
  var k;
  for (k = -45; k <= 120; k++) add(VR, on(O, VG, k, 52), k % 10 === 0);
  for (k = -20; k <= 40; k++) add(VG, on(O, VR, k, 21.6), k % 10 === 0);
})();
```
